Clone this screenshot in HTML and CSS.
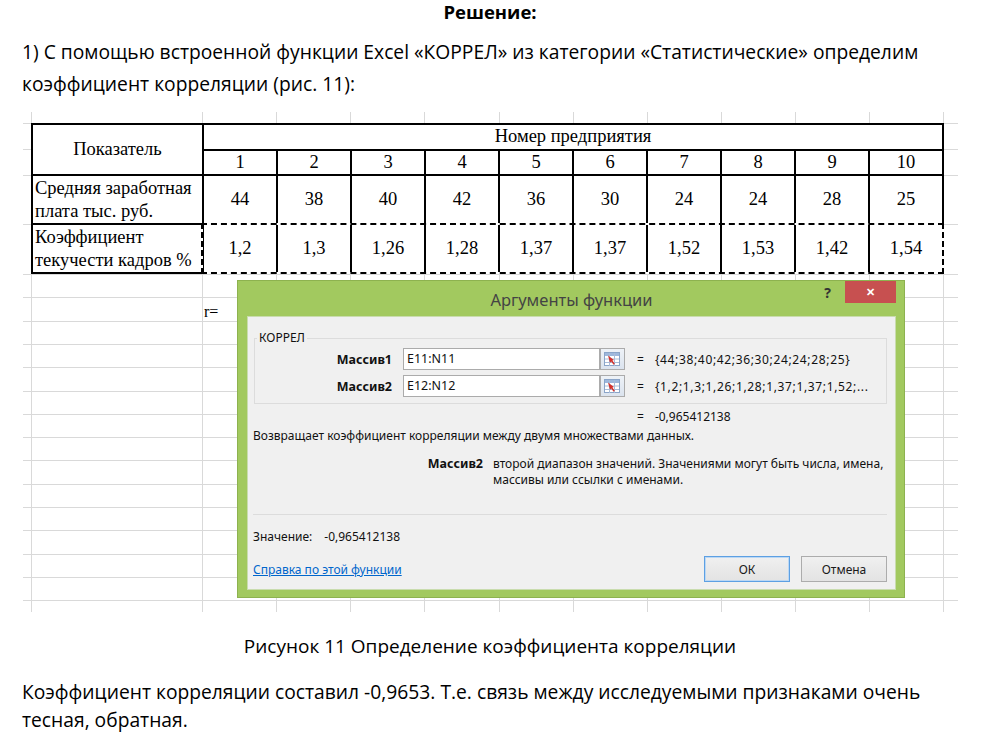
FILE: index.html
```html
<!DOCTYPE html>
<html lang="ru">
<head>
  <meta charset="UTF-8" />
  <title>Решение</title>
  <link rel="stylesheet" href="styles.css">
</head>
<body>
  <div class="doc">
    <h2 class="doc-title">Решение:</h2>
    <p class="doc-text">1) С помощью встроенной функции Excel «КОРРЕЛ» из категории «Статистические» определим коэффициент корреляции (рис. 11):</p>

    <div class="sheet">
      <table class="data">
        <colgroup>
          <col class="col-name">
          <col span="10" class="col-num">
        </colgroup>
        <tr class="row-head">
          <td rowspan="2">Показатель</td>
          <td colspan="10">Номер предприятия</td>
        </tr>
        <tr class="row-head">
          <td>1</td><td>2</td><td>3</td><td>4</td><td>5</td>
          <td>6</td><td>7</td><td>8</td><td>9</td><td>10</td>
        </tr>
        <tr class="row-tall">
          <td class="name">Средняя заработная<br>плата тыс. руб.</td>
          <td>44</td><td>38</td><td>40</td><td>42</td><td>36</td>
          <td>30</td><td>24</td><td>24</td><td>28</td><td>25</td>
        </tr>
        <tr class="row-tall">
          <td class="name">Коэффициент<br>текучести кадров %</td>
          <td>1,2</td><td>1,3</td><td>1,26</td><td>1,28</td><td>1,37</td>
          <td>1,37</td><td>1,52</td><td>1,53</td><td>1,42</td><td>1,54</td>
        </tr>
      </table>
      <div class="marquee"></div>
      <div class="cell-r">r=</div>

      <div class="dialog">
        <div class="dlg-bar">
          <span></span>
          <span class="dlg-title">Аргументы функции</span>
          <div class="dlg-controls">
            <span class="dlg-help">?</span>
            <span class="dlg-close">&#x2715;</span>
          </div>
        </div>

        <div class="dlg-body">
          <fieldset class="args">
            <legend>КОРРЕЛ</legend>
            <div class="arg">
              <b class="arg-name">Массив1</b>
              <span class="arg-input">E11:N11</span>
              <span class="arg-ref">
                <svg width="17" height="15" viewBox="0 0 17 15">
                  <rect x="0.5" y="0.5" width="15" height="13" fill="#fff" stroke="#8aa4c8"/>
                  <rect x="1" y="1" width="14" height="3" fill="#9db7dc"/>
                  <path d="M1 7h14M1 10.5h14M5.5 1v13M10.5 1v13" stroke="#a9bcd8" stroke-width="1"/>
                  <path d="M4 3.5l6 4.5-1.6 0.6 2.4 3.2-1.2 0.9-2.4-3.2-1.2 1.2z" fill="#d2322d"/>
                </svg>
              </span>
              <span class="arg-eq">=</span>
              <span class="arg-val">{44;38;40;42;36;30;24;24;28;25}</span>
            </div>
            <div class="arg">
              <b class="arg-name">Массив2</b>
              <span class="arg-input">E12:N12</span>
              <span class="arg-ref">
                <svg width="17" height="15" viewBox="0 0 17 15">
                  <rect x="0.5" y="0.5" width="15" height="13" fill="#fff" stroke="#8aa4c8"/>
                  <rect x="1" y="1" width="14" height="3" fill="#9db7dc"/>
                  <path d="M1 7h14M1 10.5h14M5.5 1v13M10.5 1v13" stroke="#a9bcd8" stroke-width="1"/>
                  <path d="M4 3.5l6 4.5-1.6 0.6 2.4 3.2-1.2 0.9-2.4-3.2-1.2 1.2z" fill="#d2322d"/>
                </svg>
              </span>
              <span class="arg-eq">=</span>
              <span class="arg-val">{1,2;1,3;1,26;1,28;1,37;1,37;1,52;...</span>
            </div>
          </fieldset>

          <div class="result"><span class="arg-eq">=</span><span class="res-val">-0,965412138</span></div>
          <div class="summary">Возвращает коэффициент корреляции между двумя множествами данных.</div>

          <div class="arg-help">
            <b>Массив2</b>
            <span>второй диапазон значений. Значениями могут быть числа, имена,<br>массивы или ссылки с именами.</span>
          </div>

          <hr class="sep">
          <div class="value">Значение:<span class="value-num">-0,965412138</span></div>

          <div class="dlg-foot">
            <a class="help-link" href="#">Справка по этой функции</a>
            <div class="buttons">
              <button class="btn btn-ok">ОК</button>
              <button class="btn">Отмена</button>
            </div>
          </div>
        </div>
      </div>
    </div>

    <p class="caption">Рисунок 11 Определение коэффициента корреляции</p>
    <p class="doc-text doc-last">Коэффициент корреляции составил -0,9653. Т.е. связь между исследуемыми признаками очень тесная, обратная.</p>
  </div>
</body>
</html>
```

FILE: styles.css
```css
body {
  margin: 0;
  background: #fff;
  color: #000;
  font-family: 'Open Sans', sans-serif;
}

.doc {
  width: 936px;
  padding-left: 22px;
}

.doc-title {
  margin: 0;
  font-size: 18.5px;
  font-weight: bold;
  line-height: 24px;
  text-align: center;
}

.doc-text {
  margin: 12px 0 0;
  font-size: 19.25px;
  line-height: 32px;
}

.doc-last {
  margin-top: 18px;
  line-height: 28px;
}

.caption {
  margin: 20px 0 0;
  font-size: 19px;
  line-height: 28px;
  text-align: center;
}

/* excel sheet with light grid lines */
.sheet {
  position: relative;
  width: 935px;
  height: 500px;
  margin: 12px 0 0 1px;
  padding: 11px 0 0 8px;
  box-sizing: border-box;
  background-image:
    linear-gradient(to right, transparent 8px, #d9d9d9 8px, #d9d9d9 9px, transparent 9px),
    repeating-linear-gradient(to right, #d9d9d9 0, #d9d9d9 1px, transparent 1px, transparent 74.13px),
    repeating-linear-gradient(to bottom, #d9d9d9 0, #d9d9d9 1px, transparent 1px, transparent 23.3px),
    linear-gradient(#d9d9d9, #d9d9d9),
    linear-gradient(#d9d9d9, #d9d9d9),
    linear-gradient(#d9d9d9, #d9d9d9),
    linear-gradient(#d9d9d9, #d9d9d9);
  background-position: 0 0, 179px 0, 0 162px, 0 11px, 0 37px, 0 63px, 0 112px;
  background-size: 100% 100%, 743px 100%, 100% 328px, 100% 1px, 100% 1px, 100% 1px, 100% 1px;
  background-repeat: no-repeat;
}

.data {
  width: 913px;
  table-layout: fixed;
  border-collapse: collapse;
  background: #fff;
  font-family: 'Liberation Serif', serif;
  font-size: 18.5px;
}

.col-name {
  width: 171px;
}

.data td {
  border: 2px solid #000;
  padding: 0 3px;
  text-align: center;
  line-height: 23px;
}

.row-head td {
  height: 23.5px;
}

.row-tall td {
  height: 47px;
}

.data td.name {
  text-align: left;
  padding-left: 2px;
}

/* copy selection around the second data row */
.marquee {
  position: absolute;
  left: 178px;
  top: 111px;
  width: 743px;
  height: 51px;
  box-sizing: border-box;
  border: 2px solid #fff;
}

.marquee::before {
  content: "";
  position: absolute;
  inset: -2px;
  border: 2px dashed #000;
}

.cell-r {
  margin: 29px 0 0 173px;
  font-family: 'Liberation Serif', serif;
  font-size: 16px;
  line-height: 18px;
}

/* function arguments dialog */
.dialog {
  position: absolute;
  left: 214px;
  top: 168px;
  width: 668px;
  height: 318px;
  box-sizing: border-box;
  background: #a2c95f;
  border: 1px solid #8db24f;
  padding: 0 8px 7px 9px;
  display: flex;
  flex-direction: column;
  font-family: 'Noto Sans', sans-serif;
  font-size: 12px;
  color: #111;
}

.dlg-bar {
  height: 35px;
  display: grid;
  grid-template-columns: 1fr auto 1fr;
}

.dlg-title {
  align-self: center;
  font-size: 16.5px;
  color: #444;
  padding-top: 1px;
}

.dlg-controls {
  display: flex;
  justify-content: flex-end;
  align-items: flex-start;
  gap: 14px;
}

.dlg-help {
  margin-top: 2px;
  font-size: 14px;
  font-weight: bold;
  color: #333;
}

.dlg-close {
  width: 51px;
  height: 22px;
  background: #c75050;
  color: #fff;
  font-size: 11px;
  font-weight: bold;
  line-height: 22px;
  text-align: center;
}

.dlg-body {
  flex: 1;
  background: #f0f0f0;
  border: 1px solid #c9dcae;
  padding: 0 8px 0 5px;
}

.args {
  margin: 14px 0 0 1px;
  padding: 3px 0 6px 0;
  border: 1px solid #dcdcdc;
  min-width: 0;
}

.args legend {
  padding: 0 2px;
  margin-left: 2px;
  line-height: 14px;
}

.arg {
  display: flex;
  align-items: center;
  height: 22px;
  margin-bottom: 5px;
}

.arg:last-child {
  margin-bottom: 0;
}

.arg-name {
  width: 137px;
  flex: none;
  text-align: right;
  font-size: 12.5px;
}

.arg-input {
  height: 22px;
  box-sizing: border-box;
  margin-left: 11px;
  width: 197px;
  flex: none;
  background: #fff;
  border: 1px solid #ababab;
  padding-left: 3px;
  font-size: 12.5px;
  line-height: 20px;
}

.arg-ref {
  width: 25px;
  height: 22px;
  flex: none;
  box-sizing: border-box;
  border: 1px solid #ababab;
  background: linear-gradient(#eef2f7, #dbe3ee);
  display: flex;
  align-items: center;
  justify-content: center;
}

.arg-eq {
  margin-left: 12px;
}

.arg-val {
  margin-left: 11px;
  white-space: nowrap;
  letter-spacing: 0.65px;
}

.result {
  margin: 5px 0 0 372px;
  line-height: 16px;
}

.res-val {
  margin-left: 11px;
}

.summary {
  margin-top: 3px;
  line-height: 16px;
}

.arg-help {
  display: grid;
  grid-template-columns: 230px 1fr;
  column-gap: 10px;
  margin: 12px -6px 0 0;
  line-height: 16px;
}

.arg-help b {
  text-align: right;
  font-size: 12.5px;
}

.arg-help span {
  white-space: nowrap;
}

.sep {
  margin: 26px 0 0;
  border: 0;
  border-top: 1px solid #dcdcdc;
}

.value {
  margin-top: 14px;
  line-height: 16px;
}

.value-num {
  padding-left: 12px;
}

.dlg-foot {
  margin-top: 11px;
  display: flex;
  align-items: center;
  justify-content: space-between;
}

.help-link {
  color: #0066cc;
  text-decoration: underline;
}

.buttons {
  display: flex;
  gap: 11px;
}

.btn {
  width: 86px;
  height: 26px;
  font-family: 'Noto Sans', sans-serif;
  font-size: 12px;
  color: #1a1a1a;
  background: linear-gradient(#f0f0f0, #e3e3e3);
  border: 1px solid #acacac;
  padding: 0;
}

.btn-ok {
  border-color: #5da0e3;
  box-shadow: inset 0 0 0 1px #bcd8f4;
}
```
